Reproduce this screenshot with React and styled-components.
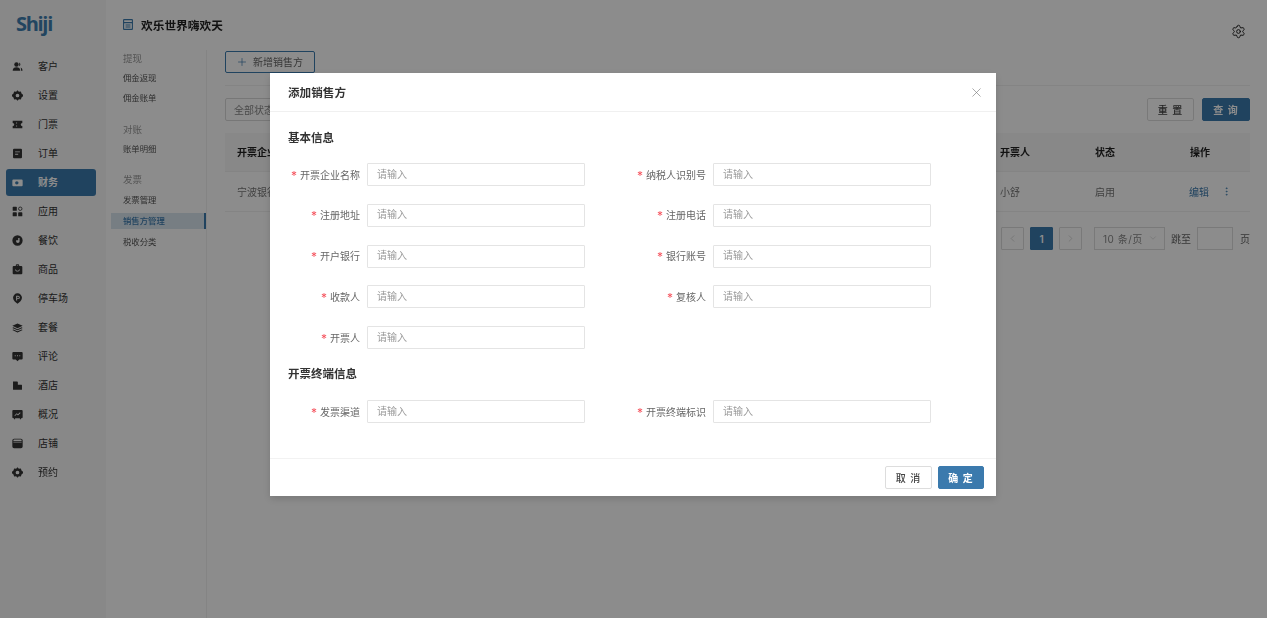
import React from "react";
import styled, { createGlobalStyle } from "styled-components";
import { Settings, Plus, X, ChevronLeft, ChevronRight, ChevronDown, MoreVertical } from "lucide-react";

const Global = createGlobalStyle`
  html, body { margin: 0; padding: 0; height: 100%; background: #fff; overflow: hidden; }
  body { font-family: "Inter", "Noto Sans CJK SC", sans-serif; color: #333; }
  #root { height: 100%; }
  * { box-sizing: border-box; }
`;

const Page = styled.div`display: flex; width: 1267px; height: 618px; filter: blur(0.35px);`;
const Sidebar = styled.aside`width: 106px; flex: none; background: #f7f7f7;`;
const LogoBox = styled.div`height: 53px; padding: 11px 0 0 16px;`;
const Logo = styled.span`
  font-family: "Open Sans", sans-serif; font-weight: 700; font-size: 20px; line-height: 26px;
  color: #3f7fb0; letter-spacing: -1.3px; display: block;
`;
const NavList = styled.nav`display: flex; flex-direction: column; gap: 2px; padding: 0 10px 0 6px;`;
const NavItem = styled.div`
  height: 27px; display: flex; align-items: center; gap: 15px; padding-left: 6px; border-radius: 3px;
  font-size: 10px; color: ${p => (p.$active ? "#fff" : "#333")};
  background: ${p => (p.$active ? "#3b7aad" : "transparent")};
  font-weight: ${p => (p.$active ? 600 : 400)};
  svg { width: 11px; height: 11px; flex: none; fill: currentColor; margin-bottom: 1px; }
  span { padding-bottom: 2px; }
`;

const Content = styled.div`flex: 1; min-width: 0; display: flex; flex-direction: column;`;
const Header = styled.header`
  height: 50px; flex: none; display: flex; align-items: center; gap: 6px; padding: 0 21px 0 17px;
  font-size: 11.7px; font-weight: 600; color: #222;
`;
const TitleWrap = styled.div`display: flex; align-items: center; gap: 8px; flex: 1; padding-bottom: 1px;`;
const HeadIcon = styled.svg`width: 10px; height: 11px; fill: none; stroke: #3b7aad; stroke-width: 1.1;`;
const GearWrap = styled.div`margin-top: 12px; color: #222; display: flex;`;
const Body = styled.div`flex: 1; display: flex; min-height: 0;`;
const SubNav = styled.div`
  width: 101px; flex: none; border-right: 1px solid #f0f0f0; padding: 1px 0 0 5px;
  display: flex; flex-direction: column; gap: 16px;
`;
const SubGroup = styled.div`
  display: flex; flex-direction: column; gap: ${p => p.$gap}px; margin-top: ${p => p.$mt}px;
`;
const SubTitle = styled.div`height: 16px; line-height: 16px; padding-left: 12px; font-size: 9.5px; color: #999; margin-bottom: -1px;`;
const SubItem = styled.div`
  height: 16px; line-height: 16px; padding-left: 12px; font-size: 8.4px;
  color: ${p => (p.$active ? "#3b7aad" : "#555")};
  background: ${p => (p.$active ? "#d9e5ef" : "transparent")};
  border-right: ${p => (p.$active ? "2px solid #3b7aad" : "none")};
  font-weight: ${p => (p.$active ? 500 : 400)};
`;

const Main = styled.main`flex: 1; min-width: 0; padding: 1px 17px 0 18px;`;
const AddBtn = styled.button`
  width: 90px; height: 22px; display: flex; align-items: center; gap: 5px; padding: 0 0 1px 10px;
  background: #fff; border: 1px solid #3b7aad; border-radius: 2px; color: #666; font: inherit; font-size: 10px;
`;
const Divider = styled.div`height: 1px; background: #f0f0f0; margin: 12px 0;`;
const FilterBar = styled.div`display: flex; justify-content: space-between; height: 23px; margin-bottom: 12px;`;
const SelectBox = styled.div`
  width: 160px; border: 1px solid #d9d9d9; border-radius: 2px; padding: 0 0 1px 8px; font-size: 10px; color: #888;
  display: flex; align-items: center;
`;
const BtnRow = styled.div`display: flex; gap: 8px;`;
const Btn = styled.button`
  width: ${p => p.$w || 47}px; height: 23px; border-radius: 2px; font: inherit; font-size: 10px; padding: 0 0 1px;
  letter-spacing: 1px; font-weight: ${p => (p.$primary ? 600 : 500)};
  background: ${p => (p.$primary ? "#3b7aad" : "#fff")};
  color: ${p => (p.$primary ? "#fff" : "#444")};
  border: 1px solid ${p => (p.$primary ? "#3b7aad" : "#ddd")};
`;
const TRow = styled.div`
  display: grid; grid-template-columns: 1fr 95px 95px 60px; align-items: center; padding: 0 0 1px 12px;
  height: ${p => (p.$head ? 39 : 40)}px; border-bottom: 1px solid #f0f0f0;
  background: ${p => (p.$head ? "#f7f7f7" : "#fff")};
  font-size: 10px; color: ${p => (p.$head ? "#222" : "#777")};
  font-weight: ${p => (p.$head ? 600 : 400)};
`;
const ActionCell = styled.div`display: flex; align-items: center; gap: 12px; margin-left: -1px; color: #3b7aad;`;
const Pager = styled.div`display: flex; justify-content: flex-end; align-items: center; margin-top: 15px; height: 23px; font-size: 10px; color: #666;`;
const PageBtn = styled.div`
  width: 23px; height: 23px; display: flex; align-items: center; justify-content: center; margin-right: 6px; border-radius: 1px;
  border: 1px solid ${p => (p.$active ? "#3b7aad" : "#ddd")};
  background: ${p => (p.$active ? "#3b7aad" : "#fff")};
  color: ${p => (p.$active ? "#fff" : "#bbb")};
  font-weight: 600;
`;
const PageSize = styled.div`
  width: 71px; height: 23px; margin-left: 6px; border: 1px solid #ddd; display: flex; align-items: center; justify-content: space-between;
  padding: 0 6px 1px 8px; color: #888; letter-spacing: 0.5px;
`;
const JumpInput = styled.div`width: 36px; height: 23px; border: 1px solid #ddd; margin: 0 7px 0 6px;`;
const JumpLabel = styled.span`margin-left: ${p => p.$ml || 0}px; white-space: nowrap;`;

const Overlay = styled.div`
  position: fixed; inset: 0; background: rgba(0, 0, 0, 0.45);
  display: flex; justify-content: center; align-items: flex-start; padding: 73px 1px 0 0;
`;
const Modal = styled.div`
  width: 726px; height: 423px; background: #fff; display: flex; flex-direction: column;
  box-shadow: 0 3px 8px rgba(0, 0, 0, 0.15); filter: blur(0.35px);
`;
const ModalHead = styled.div`
  height: 39px; flex: none; border-bottom: 1px solid #f0f0f0; display: flex; align-items: center; justify-content: space-between;
  padding: 0 12px 0 18px; font-size: 11.6px; font-weight: 600; color: #333;
`;
const ModalBody = styled.div`flex: 1; padding: 18px 18px 0;`;
const Section = styled.div`
  height: 16px; line-height: 16px; font-size: 11.5px; font-weight: 600; color: #333;
  margin-bottom: ${p => p.$mb}px; margin-top: ${p => p.$mt || 0}px;
`;
const FormGrid = styled.div`display: grid; grid-template-columns: 346px 346px; row-gap: 17.75px;`;
const Field = styled.div`display: flex; align-items: center; height: 23px;`;
const Label = styled.label`
  width: 72px; display: flex; justify-content: flex-end; align-items: center; gap: 3px; padding-bottom: 1px;
  font-size: 10px; color: #666; margin-right: 7px; white-space: nowrap;
`;
const Star = styled.span`color: #f5525c; font-size: 12px; line-height: 10px; padding-top: 3px;`;
const Input = styled.input`
  width: 218px; height: 23px; border: 1px solid #e4e4e4; border-radius: 1px; padding: 0 9px 2px; font: inherit; font-size: 10px;
  outline: none; background: #fff;
  &::placeholder { color: #999; opacity: 1; }
`;
const ModalFoot = styled.div`
  height: 38px; flex: none; border-top: 1px solid #f2f2f2; display: flex; justify-content: flex-end; gap: 6px;
  padding: 7px 12px 0 0;
`;

const icons = {
  user: <svg viewBox="0 0 16 16"><circle cx="6.5" cy="5" r="3.2"/><path d="M1 14c0-3.5 2.3-5 5.5-5s5.500 1.500 5.500 5z"/><path d="M10.500 2.300a3 3 0 0 1 0 5.400zM12.500 9.500c1.600.6 2.800 1.900 2.800 4.500h-2.100c0-2-.2-3.300-.7-4.500z"/></svg>,
  gear: <svg viewBox="0 0 16 16"><path fillRule="evenodd" d="M8 .5l2 2.200 2.900-.5.900 2.800L16 7v2l-2.200 2-.9 2.800-2.900-.5L8 15.500l-2-2.200-2.900.5-.9-2.800L0 9V7l2.200-2 .9-2.800 2.900.5zM8 5.300a2.700 2.700 0 1 0 0 5.400 2.700 2.700 0 0 0 0-5.400z"/></svg>,
  ticket: <svg viewBox="0 0 16 16"><path fillRule="evenodd" d="M1 2.500h14v3.200a2.300 2.300 0 0 0 0 4.600v3.200H1v-3.200a2.300 2.300 0 0 0 0-4.600zM6 5v1.700h1.400V5zm0 4.300V11h1.400V9.300z"/></svg>,
  order: <svg viewBox="0 0 16 16"><path fillRule="evenodd" d="M3 1h10a1.500 1.500 0 0 1 1.500 1.500v11A1.500 1.500 0 0 1 13 15H3a1.500 1.500 0 0 1-1.500-1.500v-11A1.500 1.500 0 0 1 3 1zm1.500 4v1.300h7V5zm0 3.500v1.300h4.500V8.500z"/></svg>,
  wallet: <svg viewBox="0 0 16 16"><path fillRule="evenodd" d="M2 3.500h12A1.500 1.500 0 0 1 15.500 5v7a1.500 1.500 0 0 1-1.500 1.500H2A1.500 1.500 0 0 1 .5 12V5A1.500 1.500 0 0 1 2 3.500zM7 6a2.500 2.500 0 1 0 0 5 2.500 2.500 0 0 0 0-5z"/></svg>,
  apps: <svg viewBox="0 0 16 16"><rect x="1" y="1" width="6" height="6" rx="1"/><rect x="1" y="9" width="6" height="6" rx="1"/><rect x="9" y="9" width="6" height="6" rx="1"/><circle cx="12" cy="4" r="2.500" fill="none" stroke="currentColor" strokeWidth="1.200"/></svg>,
  food: <svg viewBox="0 0 16 16"><path fillRule="evenodd" d="M8 .5a7.500 7.500 0 1 1 0 15 7.500 7.500 0 0 1 0-15zM9 4.500v3H6v1.500c0 1.500 1 2.500 2.500 2.500S11 10.500 11 9V4.500z"/></svg>,
  bag: <svg viewBox="0 0 16 16"><path fillRule="evenodd" d="M5.500 3V2a1.500 1.500 0 0 1 1.500-1.500h2A1.500 1.500 0 0 1 10.500 2v1h3A1.500 1.500 0 0 1 15 4.500v9a1.500 1.500 0 0 1-1.500 1.500h-11A1.500 1.500 0 0 1 1 13.500v-9A1.500 1.500 0 0 1 2.500 3zM7 2v1h2V2zM4.500 8c.4 2 1.800 3 3.500 3s3.100-1 3.500-3h-1.200c-.3 1.200-1.200 1.900-2.300 1.900S6 9.200 5.700 8z"/></svg>,
  pin: <svg viewBox="0 0 16 16"><path fillRule="evenodd" d="M8 .5a6.500 6.500 0 0 1 6.500 6.500c0 3.800-3.600 6.800-6.500 8.500C5.100 13.800 1.500 10.800 1.500 7A6.500 6.500 0 0 1 8 .5zM6 4v7h1.500V8.800H9A2.400 2.400 0 0 0 9 4zm1.500 1.300H9a1.100 1.100 0 0 1 0 2.200H7.500z"/></svg>,
  layers: <svg viewBox="0 0 16 16"><path d="M8 2l7.500 3.500L8 9 .5 5.500z"/><path d="M2 7.800L8 10.600l6-2.800 1.500.8L8 12.100.5 8.600z"/><path d="M2 10.800l6 2.800 6-2.800 1.500.8L8 15.100.5 11.600z"/></svg>,
  chat: <svg viewBox="0 0 16 16"><path fillRule="evenodd" d="M2 1.500h12A1.500 1.500 0 0 1 15.500 3v8a1.500 1.500 0 0 1-1.500 1.500h-3.500L8 15l-2.500-2.500H2A1.500 1.500 0 0 1 .5 11V3A1.500 1.500 0 0 1 2 1.500zM4 6.300v1.400h1.400V6.300zm3.300 0v1.400h1.400V6.300zm3.300 0v1.400H12V6.300z"/></svg>,
  hotel: <svg viewBox="0 0 16 16"><path d="M1.500 2h6l1 1v4h5.500l.5.500V14H1.500z"/></svg>,
  chart: <svg viewBox="0 0 16 16"><path fillRule="evenodd" d="M2 1.500h12A1.500 1.500 0 0 1 15.500 3v9a1.500 1.500 0 0 1-1.500 1.500h-1v1.500h-1.500v-1.500h-7V15H3v-1.500H2A1.500 1.500 0 0 1 .500 12V3A1.500 1.500 0 0 1 2 1.500zM3.500 9.300l.9.900 2.500-2.400 1.800 1.500L12.500 5.800l-.9-.9-3 2.700-1.700-1.500z"/></svg>,
  store: <svg viewBox="0 0 16 16"><path fillRule="evenodd" d="M3 1h10a2.500 2.500 0 0 1 2.500 2.500v9A2.500 2.500 0 0 1 13 15H3a2.500 2.500 0 0 1-2.500-2.500v-9A2.500 2.500 0 0 1 3 1zm-1 4.500v1h12v-1zM3 2.300C2.400 2.300 2 2.800 2 3.500v.8h12v-.8c0-.7-.4-1.200-1-1.200z"/></svg>,
};

const navItems = [
  ["客户", "user"], ["设置", "gear"], ["门票", "ticket"], ["订单", "order"], ["财务", "wallet"],
  ["应用", "apps"], ["餐饮", "food"], ["商品", "bag"], ["停车场", "pin"], ["套餐", "layers"],
  ["评论", "chat"], ["酒店", "hotel"], ["概况", "chart"], ["店铺", "store"], ["预约", "gear"],
];

const subGroups = [
  { title: "提现", items: ["佣金返现", "佣金账单"], gap: 4, mt: 0 },
  { title: "对账", items: ["账单明细"], gap: 4, mt: 0 },
  { title: "发票", items: ["发票管理", "销售方管理", "税收分类"], gap: 5, mt: -1 },
];

const basicFields = ["开票企业名称", "纳税人识别号", "注册地址", "注册电话", "开户银行", "银行账号", "收款人", "复核人", "开票人"];
const terminalFields = ["发票渠道", "开票终端标识"];

const FormField = ({ label }) => (
  <Field>
    <Label><Star>*</Star>{label}</Label>
    <Input placeholder="请输入" />
  </Field>
);

export default function App() {
  return (
    <>
      <Global />
      <Page>
        <Sidebar>
          <LogoBox><Logo>Shiji</Logo></LogoBox>
          <NavList>
            {navItems.map(([name, icon]) => (
              <NavItem key={name} $active={name === "财务"}>{icons[icon]}<span>{name}</span></NavItem>
            ))}
          </NavList>
        </Sidebar>
        <Content>
          <Header>
            <TitleWrap>
              <HeadIcon viewBox="0 0 10 11"><rect x="0.6" y="0.6" width="8.8" height="9.8" rx="0.5" /><path d="M0.6 3.600h8.800M2.500 6h5M2.500 8h5" /></HeadIcon>
              欢乐世界嗨欢天
            </TitleWrap>
            <GearWrap><Settings size={15} strokeWidth={1.6} /></GearWrap>
          </Header>
          <Body>
            <SubNav>
              {subGroups.map(g => (
                <SubGroup key={g.title} $gap={g.gap} $mt={g.mt}>
                  <SubTitle>{g.title}</SubTitle>
                  {g.items.map(it => <SubItem key={it} $active={it === "销售方管理"}>{it}</SubItem>)}
                </SubGroup>
              ))}
            </SubNav>
            <Main>
              <AddBtn><Plus size={12} strokeWidth={1.4} color="#3b7aad" />新增销售方</AddBtn>
              <Divider />
              <FilterBar>
                <SelectBox>全部状态</SelectBox>
                <BtnRow>
                  <Btn>重 置</Btn>
                  <Btn $primary $w={48}>查 询</Btn>
                </BtnRow>
              </FilterBar>
              <TRow $head><span>开票企业名称</span><span>开票人</span><span>状态</span><span>操作</span></TRow>
              <TRow><span>宁波银行</span><span>小舒</span><span>启用</span>
                <ActionCell>编辑<MoreVertical size={11} strokeWidth={1.6} /></ActionCell>
              </TRow>
              <Pager>
                <PageBtn><ChevronLeft size={11} strokeWidth={1.2} /></PageBtn>
                <PageBtn $active>1</PageBtn>
                <PageBtn><ChevronRight size={11} strokeWidth={1.2} /></PageBtn>
                <PageSize>10 条/页<ChevronDown size={10} strokeWidth={1.1} color="#bbb" /></PageSize>
                <JumpLabel $ml={6}>跳至</JumpLabel>
                <JumpInput />
                <JumpLabel>页</JumpLabel>
              </Pager>
            </Main>
          </Body>
        </Content>
      </Page>
      <Overlay>
        <Modal>
          <ModalHead>添加销售方<X size={15} strokeWidth={1} color="#777" /></ModalHead>
          <ModalBody>
            <Section $mb={17}>基本信息</Section>
            <FormGrid>{basicFields.map(f => <FormField key={f} label={f} />)}</FormGrid>
            <Section $mt={17} $mb={18}>开票终端信息</Section>
            <FormGrid>{terminalFields.map(f => <FormField key={f} label={f} />)}</FormGrid>
          </ModalBody>
          <ModalFoot>
            <Btn>取 消</Btn>
            <Btn $primary $w={46}>确 定</Btn>
          </ModalFoot>
        </Modal>
      </Overlay>
    </>
  );
}
